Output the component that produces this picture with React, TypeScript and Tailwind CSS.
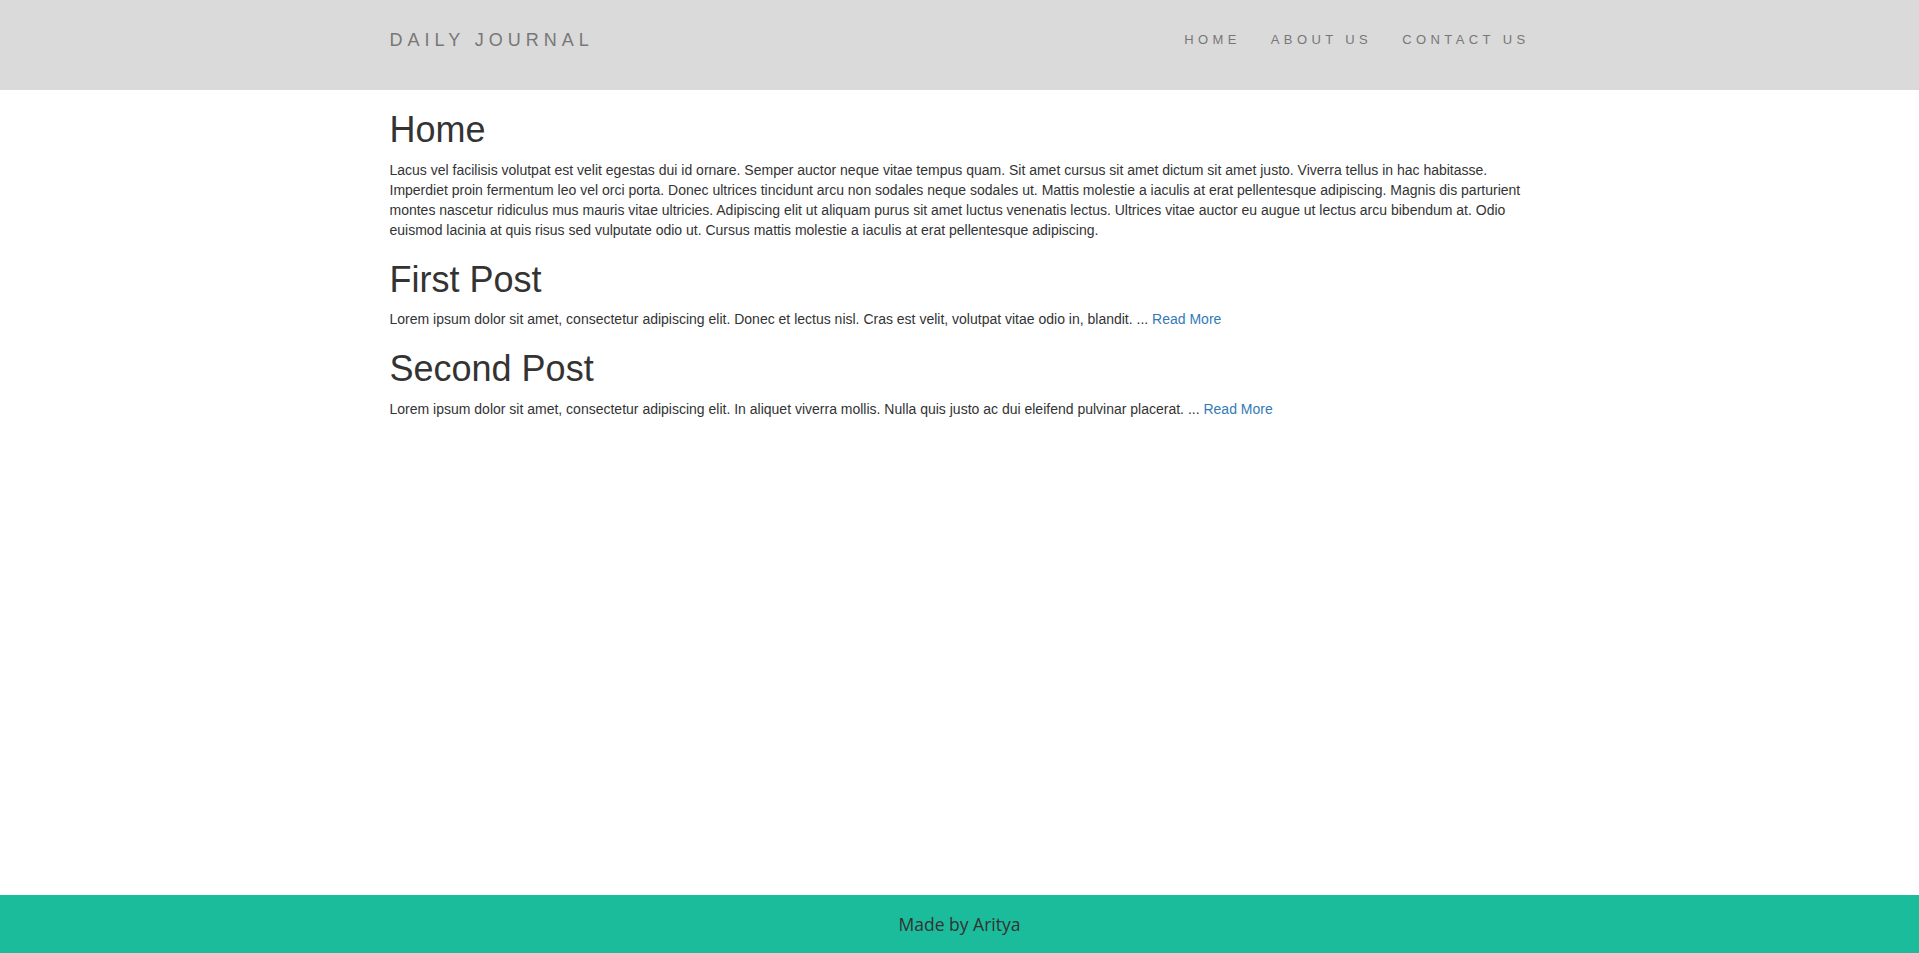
import React from 'react';

interface Post {
  title: string;
  body: string;
  truncated?: boolean;
}

const posts: Post[] = [
  {
    title: 'Home',
    body:
      'Lacus vel facilisis volutpat est velit egestas dui id ornare. Semper auctor neque vitae tempus quam. Sit amet cursus sit amet dictum sit amet justo. Viverra tellus in hac habitasse. Imperdiet proin fermentum leo vel orci porta. Donec ultrices tincidunt arcu non sodales neque sodales ut. Mattis molestie a iaculis at erat pellentesque adipiscing. Magnis dis parturient montes nascetur ridiculus mus mauris vitae ultricies. Adipiscing elit ut aliquam purus sit amet luctus venenatis lectus. Ultrices vitae auctor eu augue ut lectus arcu bibendum at. Odio euismod lacinia at quis risus sed vulputate odio ut. Cursus mattis molestie a iaculis at erat pellentesque adipiscing.',
  },
  {
    title: 'First Post',
    body: 'Lorem ipsum dolor sit amet, consectetur adipiscing elit. Donec et lectus nisl. Cras est velit, volutpat vitae odio in, blandit. ...',
    truncated: true,
  },
  {
    title: 'Second Post',
    body: 'Lorem ipsum dolor sit amet, consectetur adipiscing elit. In aliquet viverra mollis. Nulla quis justo ac dui eleifend pulvinar placerat. ...',
    truncated: true,
  },
];

const navLinks = ['HOME', 'ABOUT US', 'CONTACT US'];

export default function App() {
  return (
    <div className="min-h-screen flex flex-col bg-white text-[#333] font-['Liberation_Sans',Arial,sans-serif]">
      {/* navbar */}
      <header className="h-[90px] bg-[#dadada]">
        <div className="w-[1170px] mx-auto px-[15px] pt-[30px] flex items-start justify-between">
          <a href="#" className="text-[18px] leading-[20px] tracking-[5px] text-[#777]">
            DAILY JOURNAL
          </a>
          <nav className="flex -mr-[15px]">
            {navLinks.map((link) => (
              <a key={link} href="#" className="px-[15px] text-[13px] leading-[20px] tracking-[4.4px] text-[#777]">
                {link}
              </a>
            ))}
          </nav>
        </div>
      </header>

      {/* posts */}
      <main className="flex-1 w-[1170px] mx-auto px-[15px]">
        {posts.map((post) => (
          <section key={post.title}>
            <h1 className="mt-[20px] mb-[10px] text-[36px] leading-[1.1] font-normal">{post.title}</h1>
            <p className="mb-[10px] text-[14px] leading-[20px]">
              {post.body}
              {post.truncated && (
                <>
                  {' '}
                  <a href="#" className="text-[#337ab7]">Read More</a>
                </>
              )}
            </p>
          </section>
        ))}
      </main>

      {/* footer */}
      <footer className="h-[58px] bg-[#1abc9c] flex items-center justify-center">
        <p className="text-[17.5px] text-[#333] font-['Open_Sans','Noto_Sans',sans-serif]">Made by Aritya</p>
      </footer>
    </div>
  );
}
